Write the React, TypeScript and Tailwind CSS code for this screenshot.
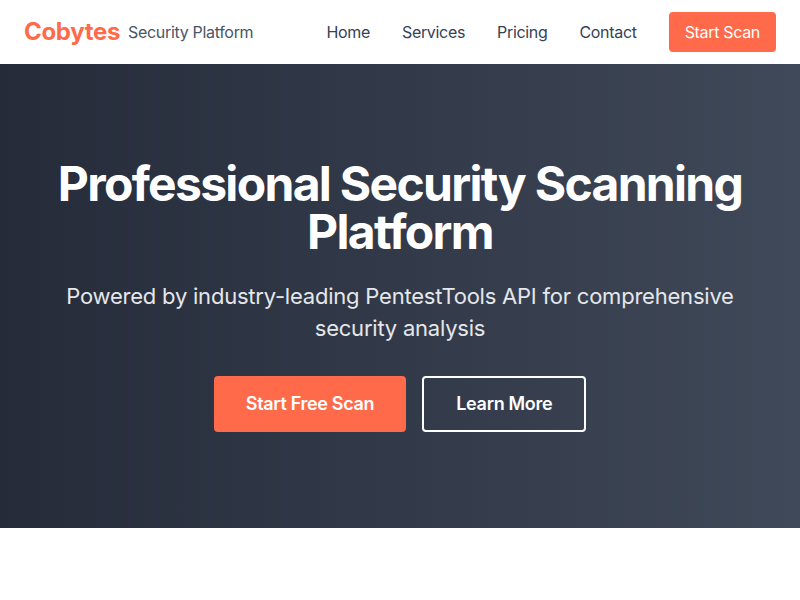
export default function App() {
  return (
    <div className="min-h-screen bg-white tracking-[-0.02em]" style={{ fontFamily: 'Inter, "Noto Sans", sans-serif' }}>
      <header className="h-16 flex items-center justify-between px-6 bg-white">
        <div className="flex items-center gap-2">
          <span className="text-2xl font-bold text-[#ff6b4a]">Cobytes</span>
          <span className="text-base text-gray-600">Security Platform</span>
        </div>
        <nav className="flex items-center gap-8">
          <a className="text-base text-gray-700">Home</a>
          <a className="text-base text-gray-700">Services</a>
          <a className="text-base text-gray-700">Pricing</a>
          <a className="text-base text-gray-700">Contact</a>
          <button className="px-4 py-2 rounded bg-[#ff6b4a] text-white text-base">Start Scan</button>
        </nav>
      </header>

      <section className="bg-linear-to-r from-[#252b39] to-[#404959] py-24">
        <div className="max-w-3xl mx-auto px-4 text-center">
          <h1 className="text-5xl font-bold text-white mb-6 tracking-[-0.035em]">Professional Security Scanning Platform</h1>
          <p className="text-[22px] leading-8 text-gray-200 mb-8 tracking-[-0.01em]">
            Powered by industry-leading PentestTools API for comprehensive security analysis
          </p>
          <div className="flex justify-center gap-4">
            <button className="px-8 py-3.5 rounded bg-[#ff6b4a] text-white text-lg font-semibold">Start Free Scan</button>
            <button className="px-8 py-3 rounded border-2 border-white text-white text-lg font-semibold">Learn More</button>
          </div>
        </div>
      </section>
    </div>
  )
}
